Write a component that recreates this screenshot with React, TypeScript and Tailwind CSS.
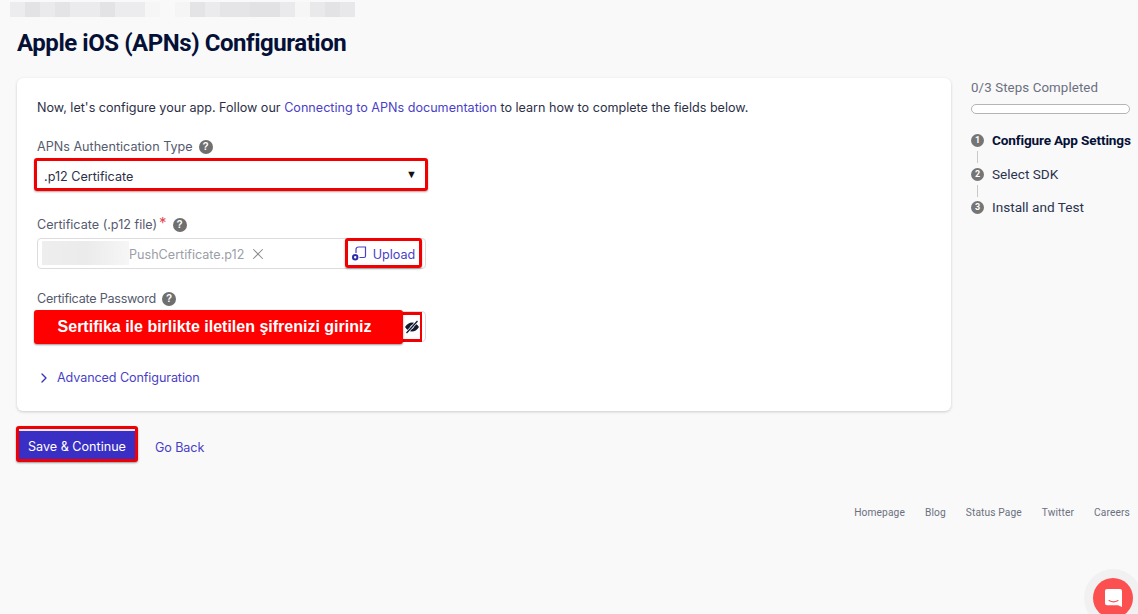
import { ChevronRight, X } from "lucide-react";

const blurBlocks = [
  ["w-[15px]", "bg-[#ececee]"],
  ["w-[15px]", "bg-[#e3e3e6]"],
  ["w-[15px]", "bg-[#eaeaec]"],
  ["w-[15px]", "bg-[#e4e4e7]"],
  ["w-[30px]", "bg-[#ebebed]"],
  ["w-[15px]", "bg-[#e3e3e6]"],
  ["w-[30px]", "bg-[#ececee]"],
  ["w-[15px]", "bg-[#f6f6f7]"],
  ["w-[15px]", "bg-[#f9f9f9]"],
  ["w-[15px]", "bg-[#f5f5f6]"],
  ["w-[15px]", "bg-[#e4e4e7]"],
  ["w-[15px]", "bg-[#ebebed]"],
  ["w-[30px]", "bg-[#e5e5e8]"],
  ["w-[30px]", "bg-[#e2e2e5]"],
  ["w-[15px]", "bg-[#eaeaec]"],
  ["w-[15px]", "bg-[#f6f6f7]"],
  ["w-[15px]", "bg-[#e9e9eb]"],
  ["w-[15px]", "bg-[#e3e3e6]"],
  ["w-[15px]", "bg-[#e8e8ea]"],
];

function HelpDot() {
  return (
    <span className="flex h-[14px] w-[14px] items-center justify-center rounded-full bg-[#6f6f6f] text-[10px] font-bold leading-none text-white [font-family:'Liberation_Sans',sans-serif]">
      ?
    </span>
  );
}

function FieldLabel({ text, required, tight }: { text: string; required?: boolean; tight?: boolean }) {
  return (
    <div className={tight ? "flex h-[20px] items-center text-[12.6px] tracking-[-0.25px] text-[#555b6e]" : "flex h-[20px] items-center text-[12.6px] text-[#555b6e]"}>
      <span>{text}</span>
      {required && <span className="ml-[2px] -mt-1 text-[15px] text-[#e5484d]">*</span>}
      <span className="ml-[6px]">
        <HelpDot />
      </span>
    </div>
  );
}

function Step({ n, label, active }: { n: number; label: string; active?: boolean }) {
  return (
    <div className="flex h-[18px] items-center gap-[8px] whitespace-nowrap [font-family:Roboto,sans-serif]">
      <span className="flex h-[13px] w-[13px] items-center justify-center rounded-full bg-[#757575] text-[9px] font-bold leading-none text-white">
        {n}
      </span>
      <span className={active ? "text-[13.6px] font-bold tracking-[-0.15px] text-[#051036]" : "text-[13.6px] text-[#2b3350]"}>
        {label}
      </span>
    </div>
  );
}

function StepLine() {
  return <div className="my-[2px] ml-[6px] h-[12px] w-px bg-[#c9c9c9]" />;
}

export default function App() {
  return (
    <div className="relative h-[614px] w-[1138px] overflow-hidden bg-[#f9f9f9] [font-family:Inter,sans-serif]">
      {/* blurred breadcrumb */}
      <div className="flex h-[22px] pl-[10px] pt-[2px]">
        {blurBlocks.map(([w, bg], i) => (
          <div key={i} className={`h-[15px] ${w} ${bg}`} />
        ))}
      </div>

      <h1 className="pl-[17px] pt-[5px] text-[24px] font-bold leading-[32px] tracking-[-0.45px] text-[#051036] [font-family:Roboto,sans-serif]">
        Apple iOS (APNs) Configuration
      </h1>

      <div className="mt-[19px] flex items-start pl-[17px]">
        <div className="h-[333px] w-[934px] rounded-[6px] bg-white px-[20px] pt-[20px] shadow-[0_1px_3px_rgba(0,0,0,0.18)]">
          <p className="h-[20px] whitespace-nowrap text-[12.6px] leading-[20px] text-[#2c3047]">
            Now, let's configure your app. Follow our{" "}
            <span className="text-[#4a3fc7]">Connecting to APNs documentation</span> to learn how to complete the fields below.
          </p>

          <div className="mt-[19px]">
            <FieldLabel text="APNs Authentication Type" />
          </div>
          <div className="-ml-[3px] mt-[1px] flex h-[33px] w-[394px] items-center justify-between rounded-[3px] border-[3px] border-[#f00000] pl-[7px] pr-[8px] text-[12.6px] text-[#2c3047] shadow-[0_1px_2px_rgba(0,0,0,0.35)]">
            <span className="pt-[5px]">.p12 Certificate</span>
            <span className="text-[11px] leading-none text-[#111] [font-family:'Liberation_Sans',sans-serif]">▼</span>
          </div>

          <div className="mt-[24px]">
            <FieldLabel text="Certificate (.p12 file)" required />
          </div>
          <div className="mt-[3px] flex h-[31px] w-[389px] items-start rounded-[4px] border border-[#dcdcdc] text-[12.6px]">
            <div className="ml-[4px] mt-[2px] h-[24px] w-[87px] bg-gradient-to-r from-[#eeeeef] via-[#ebebec] to-[#f6f6f6]" />
            <span className="self-center pt-[4px] text-[#9a9ea8]">PushCertificate.p12</span>
            <X className="ml-[5px] self-center text-[#8a8a8a]" size={18} strokeWidth={1.4} />
            <div className="ml-auto mr-[3px] -mt-[1px] flex h-[30px] w-[77px] items-center justify-center gap-[6px] rounded-[3px] border-[3px] border-[#f00000] text-[#4a3fc7] shadow-[0_1px_2px_rgba(0,0,0,0.35)]">
              <svg width="15" height="15" viewBox="0 0 15 15" fill="none">
                <path d="M4 7V3.500a2.500 2.500 0 0 1 2.500-2.500h7v9a1.500 1.500 0 0 1-1.500 1.500H7.500" stroke="#4a3fc7" strokeWidth="1.200" />
                <circle cx="3.200" cy="11.300" r="2.200" stroke="#2a2fa8" strokeWidth="2" />
              </svg>
              <span className="pt-[4px]">Upload</span>
            </div>
          </div>

          <div className="mt-[20px]">
            <FieldLabel text="Certificate Password" tight />
          </div>
          <div className="relative mt-[2px] flex h-[31px] w-[389px] items-center justify-end rounded-[4px] border border-[#dcdcdc] pr-[3px]">
            <div className="absolute -left-[4px] -top-[2px] flex h-[34px] w-[369px] items-center justify-center rounded-[3px] bg-[#fe0000] pr-[8px] text-[16px] font-bold text-white shadow-[0_1px_2px_rgba(0,0,0,0.4)] [font-family:'Liberation_Sans',sans-serif]">
              Sertifika ile birlikte iletilen şifrenizi giriniz
            </div>
            <div className="flex h-[30px] w-[19px] items-center justify-center border-y-[3px] border-r-[2px] border-[#f00000] bg-white">
              <svg width="16" height="14" viewBox="0 0 16 14" fill="none">
                <path d="M1 7c2-3 4.400-4.500 7-4.500S13 4 15 7c-2 3-4.400 4.500-7 4.500S3 10 1 7Z" fill="#111a2e" />
                <circle cx="8" cy="7" r="1.700" fill="#fff" />
                <path d="M13.500 1 2.500 13" stroke="#fff" strokeWidth="2.600" />
                <path d="M13.500 1 2.500 13" stroke="#111a2e" strokeWidth="1.300" />
              </svg>
            </div>
          </div>

          <div className="mt-[26px] flex h-[20px] items-center text-[12.6px] tracking-[-0.1px] text-[#4a3fc7]">
            <ChevronRight className="-ml-[1px] text-[#3a35b8]" size={16} strokeWidth={2} />
            <span className="ml-[5px]">Advanced Configuration</span>
          </div>
        </div>

        <aside className="ml-[20px] w-[160px]">
          <div className="h-[20px] whitespace-nowrap text-[13.3px] leading-[19px] tracking-[0.1px] text-[#6b7080] [font-family:Roboto,sans-serif]">
            0/3 Steps Completed
          </div>
          <div className="mt-[6px] h-[10px] w-[159px] rounded-full border border-[#b5b5b5] bg-white" />
          <div className="mt-[17px]">
            <Step n={1} label="Configure App Settings" active />
            <StepLine />
            <Step n={2} label="Select SDK" />
            <div className="my-[1.500px] ml-[6px] h-[12px] w-px bg-[#c9c9c9]" />
            <Step n={3} label="Install and Test" />
          </div>
        </aside>
      </div>

      <div className="mt-[15px] flex h-[36px] items-start pl-[16px]">
        <button className="h-[36px] w-[122px] rounded-[3px] border-[3px] border-[#f00000] bg-[#3a2fc4] pt-[6px] text-[12.6px] text-white shadow-[inset_0_2px_0_#e8e8f5,0_1px_2px_rgba(0,0,0,0.4)]">
          Save &amp; Continue
        </button>
        <span className="ml-[17px] pt-[13px] text-[12.6px] tracking-[-0.1px] text-[#4a3fc7]">Go Back</span>
      </div>

      <footer className="mt-[43px] flex justify-end gap-[20px] pr-[8px] text-[10.2px] tracking-[0.12px] text-[#6b7080] [font-family:Roboto,sans-serif]">
        <span>Homepage</span>
        <span>Blog</span>
        <span>Status Page</span>
        <span>Twitter</span>
        <span>Careers</span>
      </footer>

      {/* chat launcher */}
      <div className="absolute left-[1084px] top-[569px] flex h-[58px] w-[58px] items-center justify-center rounded-full bg-[#f1f1f1]">
        <div className="flex h-[40px] w-[40px] items-center justify-center rounded-full bg-[#fc4f4f]">
          <svg width="19" height="20" viewBox="0 0 19 20">
            <path d="M3 1h13a2 2 0 0 1 2 2v16l-4-1.800H3a2 2 0 0 1-2-2V3a2 2 0 0 1 2-2Z" fill="#fff" />
            <path d="M5 12.500c2.500 1.500 6.500 1.500 9 0" stroke="#fc4f4f" strokeWidth="1.100" fill="none" strokeLinecap="round" />
          </svg>
        </div>
      </div>
    </div>
  );
}
